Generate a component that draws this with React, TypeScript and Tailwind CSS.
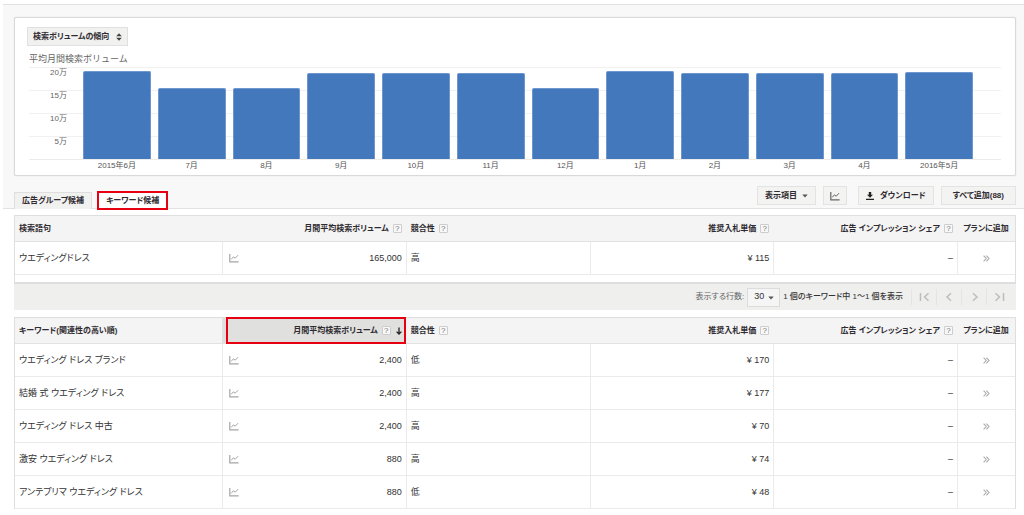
import type { ReactNode } from "react";

const volumes = [
  { month: "2015年6月", value: 191000 },
  { month: "7月", value: 154000 },
  { month: "8月", value: 154000 },
  { month: "9月", value: 187000 },
  { month: "10月", value: 188000 },
  { month: "11月", value: 187000 },
  { month: "12月", value: 154000 },
  { month: "1月", value: 191000 },
  { month: "2月", value: 188000 },
  { month: "3月", value: 188000 },
  { month: "4月", value: 188000 },
  { month: "2016年5月", value: 189000 },
];

const MAX_VOLUME = 200000;

type Row = { keyword: string; volume: string; competition: string; bid: string };

const searched: Row[] = [
  { keyword: "ウエディングドレス", volume: "165,000", competition: "高", bid: "¥ 115" },
];

const ideas: Row[] = [
  { keyword: "ウエディング ドレス ブランド", volume: "2,400", competition: "低", bid: "¥ 170" },
  { keyword: "結婚 式 ウエディング ドレス", volume: "2,400", competition: "高", bid: "¥ 177" },
  { keyword: "ウエディング ドレス 中古", volume: "2,400", competition: "高", bid: "¥ 70" },
  { keyword: "激安 ウエディング ドレス", volume: "880", competition: "高", bid: "¥ 74" },
  { keyword: "アンテプリマ ウエディング ドレス", volume: "880", competition: "低", bid: "¥ 48" },
];

function TrendIcon({ className }: { className: string }) {
  return (
    <svg viewBox="0 0 10 10" className={`h-[10px] w-[10px] ${className}`} fill="none" stroke="currentColor">
      <path d="M0.8 1V8.8H9.6" strokeWidth="1.2" />
      <path d="M2.2 6.4L4.4 3.8L6.2 5.2L9 2.2" strokeWidth="1" />
    </svg>
  );
}

function CaretIcon({ className = "" }: { className?: string }) {
  return (
    <svg viewBox="0 0 6 4" className={`h-1 w-[6px] ${className}`} fill="#555">
      <path d="M0.3 0.4H5.7L3 3.5Z" />
    </svg>
  );
}

function ToolButton({ children, label, className = "" }: { children: ReactNode; label?: string; className?: string }) {
  return (
    <button
      type="button"
      aria-label={label}
      className={`flex h-[19px] items-center border border-[#e3e3e3] bg-[#f3f3f2] text-[8px] font-bold text-[#2f2b30] ${className}`}
    >
      {children}
    </button>
  );
}

function Help() {
  return (
    <button
      type="button"
      className="ml-1 flex h-[9px] w-[9px] shrink-0 items-center justify-center rounded-[1px] border border-[#cdcdcd] bg-[#f8f8f8] text-[8px] leading-none font-normal text-[#777]"
    >
      ?
    </button>
  );
}

function TrendChart() {
  return (
    <div className="mx-3.5">
      <div className="grid">
        {/* Scale lines */}
        <div className="col-start-1 row-start-1 flex h-[93px] flex-col border-b border-[#ececec]">
          {["20万", "15万", "10万", "5万"].map((label) => (
            <div key={label} className="flex-1 border-t border-[#f1f1f1]">
              <div className="w-[38px] text-right text-[8px] leading-[10px] text-[#666]">{label}</div>
            </div>
          ))}
        </div>
        {/* Bars */}
        <div className="col-start-1 row-start-1 mr-7 ml-[54px] flex h-[92px] items-end gap-[7px]">
          {volumes.map((v) => (
            <div
              key={v.month}
              className="flex-1 rounded-t-[2px] border border-b-0 border-[#6f97cf] bg-[#4478bc]"
              style={{ height: `${(v.value / MAX_VOLUME) * 100}%` }}
            />
          ))}
        </div>
      </div>
      <div className="mr-7 ml-[54px] flex gap-[7px]">
        {volumes.map((v) => (
          <div key={v.month} className="flex-1 text-center text-[8px] leading-[12px] text-[#555]">
            {v.month}
          </div>
        ))}
      </div>
    </div>
  );
}

function KeywordTable({ title, rows, sorted = false }: { title: string; rows: Row[]; sorted?: boolean }) {
  const th = "h-[26px] border-b border-[#e2e2e2] px-1 font-bold";
  const td = "h-[33px] border-b border-l border-[#ebebeb] px-1";
  return (
    <table className="w-full table-fixed border-separate border-spacing-0 text-[9px] leading-[12px] text-[#333]">
      <colgroup>
        <col className="w-[207px]" />
        <col />
        <col />
        <col />
        <col />
        <col className="w-[58px]" />
      </colgroup>
      <thead className="bg-[#f4f4f4] text-[8px] whitespace-nowrap text-[#2f2b30]">
        <tr>
          <th className={`${th} text-left`}>{title}</th>
          <th className={`${th} relative ${sorted ? "bg-[#e0e0df]" : ""}`}>
            <div className="flex items-center justify-end">
              月間平均検索ボリューム
              <Help />
              {sorted && (
                <svg viewBox="0 0 6 8" className="ml-[5px] h-2 w-[6px]" fill="none" stroke="#222" strokeWidth="1.3">
                  <path d="M3 0.5V7M0.6 4.6L3 7L5.4 4.6" />
                </svg>
              )}
            </div>
            {sorted && <div className="absolute -top-px right-0 -bottom-px left-1 border-2 border-[#e60012]" />}
          </th>
          <th className={th}>
            <div className="flex items-center pl-px">
              競合性
              <Help />
            </div>
          </th>
          <th className={th}>
            <div className="flex items-center justify-end">
              推奨入札単価
              <Help />
            </div>
          </th>
          <th className={th}>
            <div className="flex items-center justify-end">
              広告 インプレッション シェア
              <Help />
            </div>
          </th>
          <th className={`${th} text-center`}>プランに追加</th>
        </tr>
      </thead>
      <tbody>
        {rows.map((row) => (
          <tr key={row.keyword}>
            <td className="h-[33px] border-b border-[#ebebeb] px-1">{row.keyword}</td>
            <td className={td}>
              <div className="flex items-center justify-between pl-0.5">
                <TrendIcon className="text-[#a5a5a5]" />
                {row.volume}
              </div>
            </td>
            <td className={td}>{row.competition}</td>
            <td className={`${td} text-right`}>{row.bid}</td>
            <td className={`${td} text-right`}>–</td>
            <td className={td}>
              <button type="button" aria-label="追加" className="mx-auto block text-[#aaa]">
                <svg viewBox="0 0 7 7" className="h-[7px] w-[7px]" fill="none" stroke="currentColor" strokeWidth="1.1">
                  <path d="M0.6 0.6L3.2 3.5L0.6 6.4M3.4 0.6L6 3.5L3.4 6.4" />
                </svg>
              </button>
            </td>
          </tr>
        ))}
      </tbody>
    </table>
  );
}

const pagerIcons = [
  { label: "最初", d: "M1.5 1V9M9.5 1.2L5.5 5L9.5 8.8" },
  { label: "前へ", d: "M7 1.2L3 5L7 8.8" },
  { label: "次へ", d: "M4 1.2L8 5L4 8.8" },
  { label: "最後", d: "M1.5 1.2L5.5 5L1.5 8.8M9.5 1V9" },
];

function Pager() {
  return (
    <div className="flex h-[26px] items-center justify-end bg-[#efefee] pr-[5px] text-[8px] text-[#333]">
      <label htmlFor="rows" className="mr-[3px] text-[#666]">
        表示する行数:
      </label>
      <div className="relative mr-[3px]">
        <select
          id="rows"
          className="block h-[19px] w-[33px] appearance-none border border-[#dcdcdc] bg-[#f5f5f5] pl-[6px] text-[9px] text-[#333]"
        >
          <option>30</option>
        </select>
        <CaretIcon className="pointer-events-none absolute top-2 right-[6px]" />
      </div>
      <span className="mr-2 font-medium">1 個のキーワード中 1～1 個を表示</span>
      {pagerIcons.map((icon) => (
        <button
          key={icon.label}
          type="button"
          aria-label={icon.label}
          className="flex h-4 w-[25px] items-center justify-center border-l border-[#e4e4e4] text-[#bdbdbd]"
        >
          <svg viewBox="0 0 11 10" className="h-[10px] w-[11px]" fill="none" stroke="currentColor" strokeWidth="1.5">
            <path d={icon.d} />
          </svg>
        </button>
      ))}
    </div>
  );
}

export default function App() {
  return (
    <div className="bg-white pt-1 pl-[3px] font-['Liberation_Sans','Noto_Sans_CJK_JP',sans-serif] [font-feature-settings:'palt']" lang="ja">
      <div className="border-y border-[#e2e2e2] bg-[#f8f8f8] pt-3 pr-2 pl-[11px]">
        {/* Search volume trend */}
        <div className="rounded-[2px] border border-[#d9d9d9] bg-white pt-[9px] pb-[3px] shadow-[0_0_1px_#ccc]">
          <div className="relative ml-3 w-[101px]">
            <select
              aria-label="グラフ"
              className="block h-[19px] w-full appearance-none border border-[#e0e0e0] bg-[#f1f1f0] pl-[5px] text-[8px] font-bold text-[#2f2b30]"
            >
              <option>検索ボリュームの傾向</option>
            </select>
            <svg viewBox="0 0 6 8" className="pointer-events-none absolute top-[6px] right-[6px] h-2 w-[6px]" fill="#444">
              <path d="M0.2 3.2L3 0.3L5.8 3.2ZM0.2 4.8H5.8L3 7.7Z" />
            </svg>
          </div>
          <h2 className="mt-[7px] mb-0.5 ml-3.5 text-[9px] leading-[12px] text-[#666] [font-feature-settings:normal]">
            平均月間検索ボリューム
          </h2>
          <TrendChart />
        </div>

        {/* Tabs and actions */}
        <div className="mt-[10px] flex items-end justify-between">
          <div role="tablist" className="-mb-0.5 flex items-center gap-[5px]">
            <button
              type="button"
              role="tab"
              aria-selected="false"
              className="h-[17px] border border-b-0 border-[#dedede] bg-[#f1f1f0] px-[7px] text-[8px] font-bold text-[#2f2b30]"
            >
              広告グループ候補
            </button>
            <button
              type="button"
              role="tab"
              aria-selected="true"
              className="h-[19px] border-2 border-[#e60012] bg-white px-[7px] text-[8px] font-bold text-[#2f2b30]"
            >
              キーワード候補
            </button>
          </div>
          <div className="mb-[3px] flex gap-[7px]">
            <ToolButton className="gap-[5px] px-[7px]">
              表示項目
              <CaretIcon />
            </ToolButton>
            <ToolButton label="グラフ表示" className="mr-1 px-[6px]">
              <TrendIcon className="text-[#666]" />
            </ToolButton>
            <ToolButton className="gap-[6px] px-[7px]">
              <svg viewBox="0 0 8 8" className="h-2 w-2" fill="#222">
                <path d="M2.8 0H5.2V2.8H7L4 5.8L1 2.8H2.8ZM0 6.8H8V8H0Z" />
              </svg>
              ダウンロード
            </ToolButton>
            <ToolButton className="px-[11px]">すべて追加(88)</ToolButton>
          </div>
        </div>
      </div>

      {/* Keyword tables */}
      <div className="pt-[6px] pr-2 pb-[5px] pl-[11px]">
        <div className="border border-b-2 border-[#dedede] pb-[7px]">
          <KeywordTable title="検索語句" rows={searched} />
        </div>
        <Pager />
        <div className="mt-[7px] border border-b-0 border-[#dedede]">
          <KeywordTable title="キーワード(関連性の高い順)" rows={ideas} sorted />
        </div>
      </div>
    </div>
  );
}
